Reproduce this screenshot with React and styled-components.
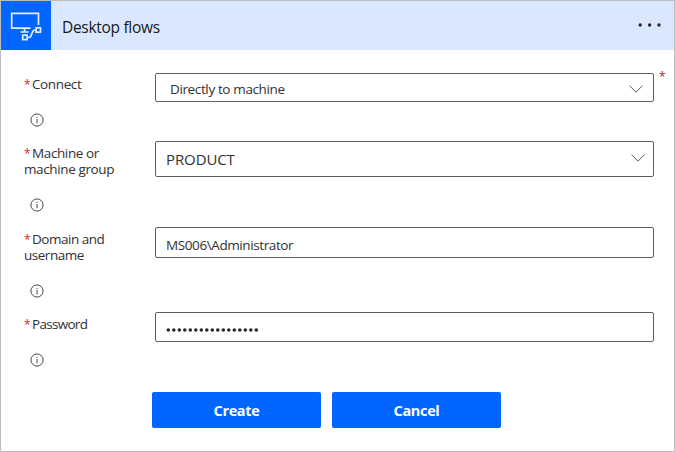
import React from 'react';
import styled, { createGlobalStyle } from 'styled-components';

const GlobalStyle = createGlobalStyle`
  * { box-sizing: border-box; }
  body { margin: 0; background: #fff; font-family: "Open Sans", "Noto Sans", sans-serif; color: #323130; }
`;

const Card = styled.main`
  width: 675px;
  height: 452px;
  border: 1px solid #bebebe;
  background: #fff;
`;

const Header = styled.header`
  display: flex;
  align-items: center;
  height: 49px;
  background: #d9e7ff;
`;

const LogoTile = styled.div`
  width: 50px;
  height: 49px;
  flex: none;
  background: #0066ff;
  svg { display: block; }
`;

const Title = styled.h1`
  flex: 1;
  margin: 2px 0 0 11px;
  font-size: 15.5px;
  font-weight: 400;
  line-height: 20px;
  letter-spacing: -0.3px;
  color: #1b1a19;
`;

const MoreButton = styled.button`
  display: flex;
  padding: 0;
  margin: -2px 11px 0 0;
  border: 0;
  background: none;
`;

const Form = styled.form`
  padding-top: 23px;
`;

const Row = styled.div`
  display: flex;
  align-items: flex-start;
  height: ${(p) => p.$height}px;
  padding-left: 23px;
`;

const LabelColumn = styled.div`
  width: 131px;
  flex: none;
  padding-top: ${(p) => p.$top ?? 3.5}px;
`;

const Label = styled.label`
  display: block;
  font-size: 13.5px;
  line-height: 16.5px;
  letter-spacing: ${(p) => p.$tracking ?? -0.38}px;
  white-space: pre-line;
`;

const Star = styled.span`
  display: inline-block;
  width: 8px;
  font-size: 12px;
  line-height: 12px;
  letter-spacing: 0;
  color: #e0202c;
`;

const InfoIcon = styled.svg`
  display: block;
  margin: 20px 0 0 6px;
`;

const Field = styled.div`
  display: flex;
  align-items: center;
  justify-content: space-between;
  width: 499px;
  height: ${(p) => p.$height}px;
  padding: 0 ${(p) => p.$right ?? 10}px 0 ${(p) => p.$left ?? 10}px;
  border: 1px solid #605e5c;
  border-radius: 2px;
`;

const Value = styled.span`
  padding-top: ${(p) => p.$drop ?? 4}px;
  font-size: ${(p) => p.$size ?? 13.5}px;
  line-height: 18px;
  letter-spacing: ${(p) => p.$tracking ?? -0.4}px;
`;

const Chevron = styled.svg`
  display: block;
  margin-top: ${(p) => p.$shift ?? 0}px;
`;

const FieldStar = styled.span`
  margin: -4px 0 0 5px;
  font-size: 12px;
  line-height: 16px;
  color: #a4262c;
`;

const Actions = styled.div`
  display: flex;
  gap: 11px;
  padding-left: 151px;
`;

const Button = styled.button`
  width: 169px;
  height: 36px;
  padding: 2px 0 0;
  border: 0;
  border-radius: 2px;
  background: #0066ff;
  color: #fff;
  font: 700 14.5px/20px "Open Sans", sans-serif;
  letter-spacing: -0.35px;
`;

const Logo = () => (
  <svg width="50" height="49" viewBox="1 1 50 49" fill="none" stroke="#e3eeff" strokeWidth="1.7">
    <path d="M38.5 25V13.3H11.7V28.2H30.5" />
    <path d="M24.5 28.5V31.5M20.5 32H28.5" />
    <rect x="36.1" y="27.8" width="4.4" height="4.4" />
    <rect x="22.7" y="35.2" width="4.4" height="4.4" />
    <path d="M27.5 37.5H29Q30.3 37.5 30.8 36.2L33 31.2Q33.5 30 35 30H36" />
  </svg>
);

const Info = () => (
  <InfoIcon width="14" height="14" viewBox="0 0 14 14" fill="none" stroke="#484644">
    <circle cx="7" cy="7" r="6.1" />
    <path d="M7 6V10.3" />
    <path d="M7 3.9V5" />
  </InfoIcon>
);

const Arrow = ({ shift }) => (
  <Chevron $shift={shift} width="14" height="8" viewBox="0 0 14 8" fill="none" stroke="#605e5c">
    <path d="M0.5 0.7L7 7.1L13.5 0.7" />
  </Chevron>
);

const FormRow = ({ label, tracking, height, top, children }) => (
  <Row $height={height}>
    <LabelColumn $top={top}>
      <Label $tracking={tracking}><Star>*</Star>{label}</Label>
      <Info />
    </LabelColumn>
    {children}
  </Row>
);

const Dots = () => (
  <svg width="26" height="6" viewBox="0 0 26 6" fill="#292827">
    <circle cx="3.2" cy="3" r="1.7" />
    <circle cx="12.6" cy="3" r="1.7" />
    <circle cx="22" cy="3" r="1.7" />
  </svg>
);

const PasswordDots = () => (
  <svg width="94" height="4" viewBox="0 0 94 4" fill="#292827">
    {Array.from({ length: 17 }, (_, i) => (
      <circle key={i} cx={2.3 + i * 5.5} cy="2" r="1.8" />
    ))}
  </svg>
);

export default function App() {
  return (
    <>
      <GlobalStyle />
      <Card>
        <Header>
          <LogoTile><Logo /></LogoTile>
          <Title>Desktop flows</Title>
          <MoreButton type="button" aria-label="More"><Dots /></MoreButton>
        </Header>
        <Form>
          <FormRow label="Connect" height={68} top={3}>
            <Field $height={29} $left={14}>
              <Value $drop={3} $tracking={-0.37}>Directly to machine</Value>
              <Arrow shift={2} />
            </Field>
            <FieldStar>*</FieldStar>
          </FormRow>
          <FormRow label={'Machine or\nmachine group'} height={86}>
            <Field $height={36} $right={8}>
              <Value $size={15} $drop={0} $tracking={-0.1}>PRODUCT</Value>
              <Arrow shift={-3} />
            </Field>
          </FormRow>
          <FormRow label={'Domain and\nusername'} tracking={-0.48} height={85}>
            <Field $height={31}>
              <Value>MS006\Administrator</Value>
            </Field>
          </FormRow>
          <FormRow label="Password" tracking={-0.7} height={80} top={4}>
            <Field $height={30}>
              <Value $drop={0}><PasswordDots /></Value>
            </Field>
          </FormRow>
          <Actions>
            <Button type="button">Create</Button>
            <Button type="button">Cancel</Button>
          </Actions>
        </Form>
      </Card>
    </>
  );
}
